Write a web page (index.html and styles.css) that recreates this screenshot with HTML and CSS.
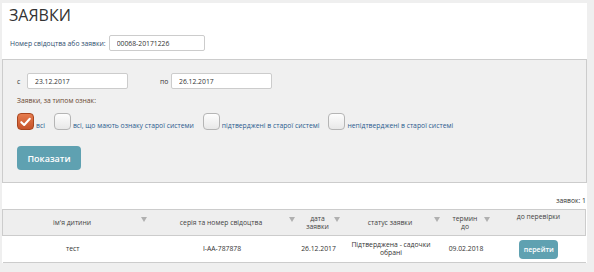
FILE: index.html
```html
<!DOCTYPE html>
<html lang="uk">
<head>
    <meta charset="UTF-8">
    <meta name="viewport" content="width=device-width, initial-scale=1.0">
    <title>Заявки</title>
    <link rel="stylesheet" href="styles.css">
</head>
<body>
    <div class="page">
        <h1 class="title">ЗАЯВКИ</h1>

        <div class="search">
            <label class="searchLabel">Номер свідоцтва або заявки:</label>
            <input class="field searchField" type="text" value="00068-20171226">
        </div>

        <div class="filter">
            <div class="dates">
                <span class="dateLabel">с</span>
                <input class="field dateField" type="text" value="23.12.2017">
                <span class="dateLabel dateTo">по</span>
                <input class="field dateField" type="text" value="26.12.2017">
            </div>

            <div class="typeLabel">Заявки, за типом ознак:</div>

            <div class="checks">
                <label class="check">
                    <span class="box checked">
                        <svg viewBox="0 0 16 16" width="16" height="16">
                            <path d="M3.5 8.2 L6.6 11.2 L12.6 4.6" fill="none" stroke="#fff" stroke-width="2.2" stroke-linecap="round" stroke-linejoin="round"/>
                        </svg>
                    </span>
                    <span class="checkText">всі</span>
                </label>
                <label class="check">
                    <span class="box"></span>
                    <span class="checkText">всі, що мають ознаку старої системи</span>
                </label>
                <label class="check">
                    <span class="box"></span>
                    <span class="checkText">підтверджені в старої системі</span>
                </label>
                <label class="check">
                    <span class="box"></span>
                    <span class="checkText">непідтверджені в старої системі</span>
                </label>
            </div>

            <button class="btn showBtn">Показати</button>
        </div>

        <div class="count">заявок: 1</div>

        <table class="grid">
            <thead>
                <tr>
                    <th class="colName"><span>ім'я дитини</span><i class="sort"></i></th>
                    <th class="colCert"><span>серія та номер свідоцтва</span><i class="sort"></i></th>
                    <th class="colDate"><span>дата<br>заявки</span><i class="sort"></i></th>
                    <th class="colStatus"><span>статус заявки</span><i class="sort"></i></th>
                    <th class="colTerm"><span>термин<br>до</span><i class="sort"></i></th>
                    <th class="colCheck"><span>до перевірки</span></th>
                </tr>
            </thead>
            <tbody>
                <tr>
                    <td>тест</td>
                    <td>I-AA-787878</td>
                    <td>26.12.2017</td>
                    <td>Підтверджена - садочки<br>обрані</td>
                    <td>09.02.2018</td>
                    <td><button class="btn goBtn">перейти</button></td>
                </tr>
            </tbody>
        </table>
    </div>
</body>
</html>
```

FILE: styles.css
```css
body{
    margin: 0px;
    padding: 0px;
    background-color: #efefef;
    font-family: "Open Sans", "DejaVu Sans", sans-serif;
    color: #333;
}
.page{
    width: 585px;
    margin: 3px 0px 0px 2px;
    background-color: white;
    overflow: hidden;
}
.title{
    margin: 0px;
    padding: 2px 0px 0px 7px;
    height: 24px;
    font-size: 16px;
    line-height: 20px;
    font-weight: normal;
    color: #333;
}
.search{
    display: flex;
    align-items: center;
    padding: 6px 0px 0px 8px;
    height: 16px;
}
.searchLabel{
    font-size: 6.8px;
    color: #2f4f6f;
    margin-right: 3px;
}
.field{
    box-sizing: border-box;
    height: 16px;
    border: 1px solid #ccc;
    border-radius: 2px;
    background-color: white;
    font-family: "Open Sans", "DejaVu Sans", sans-serif;
    font-size: 6.8px;
    color: #333;
    padding: 0px 7px;
    outline: none;
}
.searchField{
    width: 96px;
}
.filter{
    margin-top: 8px;
    background-color: #f0f0f0;
    border: 1px solid #ccc;
    padding: 13px 14px 12px 14px;
}
.dates{
    display: flex;
    align-items: center;
    height: 16px;
}
.dateLabel{
    font-size: 6.8px;
    color: #333;
    width: 10px;
}
.dateTo{
    margin-left: 32px;
    width: 11px;
}
.dateField{
    width: 101px;
}
.typeLabel{
    margin-top: 7px;
    font-size: 6.8px;
    color: #6a4a32;
}
.checks{
    display: flex;
    align-items: flex-end;
    margin-top: 8px;
    height: 17px;
}
.check{
    display: flex;
    align-items: flex-end;
    margin-right: 9px;
}
.box{
    box-sizing: border-box;
    width: 17px;
    height: 17px;
    border: 1px solid #b5b5b5;
    border-radius: 4px;
    background: linear-gradient(#fdfdfd, #e8e8e8);
    display: flex;
}
.checked{
    border-color: #a8451e;
    background: linear-gradient(#e67c4e, #c6532a);
}
.checkText{
    font-size: 6.8px;
    color: #2b5c8f;
    margin-left: 2px;
    line-height: 8px;
}
.btn{
    border: none;
    border-radius: 4px;
    background-color: #5fa1b1;
    color: white;
    font-family: "Open Sans", "DejaVu Sans", sans-serif;
    font-weight: 600;
    padding: 0px;
}
.showBtn{
    margin-top: 16px;
    width: 64px;
    height: 24px;
    font-size: 9px;
}
.count{
    margin-top: 13px;
    height: 13px;
    text-align: right;
    font-size: 6.8px;
    color: #333;
    padding-right: 1px;
}
.grid{
    width: 584px;
    border-collapse: collapse;
    font-size: 6.8px;
}
.grid th{
    background-color: #eeeeee;
    border-top: 1px solid #ccc;
    border-bottom: 1px solid #ccc;
    font-weight: normal;
    height: 22px;
    padding: 0px 12px 0px 0px;
    position: relative;
    color: #444;
    line-height: 8px;
}
.grid th:first-child{
    border-left: 1px solid #ccc;
}
.grid th:last-child{
    border-right: 1px solid #ccc;
}
.sort{
    position: absolute;
    right: 6px;
    top: 7px;
    width: 0px;
    height: 0px;
    border-left: 3.5px solid transparent;
    border-right: 3.5px solid transparent;
    border-top: 5px solid #b0b0b0;
}
.colName{ width: 138px; }
.colCert{ width: 136px; }
.colDate{ width: 33px; }
.colStatus{ width: 88px; }
.colTerm{ width: 38px; }
.colCheck{
    vertical-align: top;
    padding: 3px 4px 0px 0px !important;
}
.grid td{
    text-align: center;
    height: 26px;
    padding: 0px 10px 0px 0px;
    border-bottom: 1px solid #ccc;
    line-height: 8px;
    color: #333;
}
.grid td:last-child{
    padding: 0px 4px 0px 0px;
}
.goBtn{
    width: 39px;
    height: 19px;
    font-size: 7px;
}
```
